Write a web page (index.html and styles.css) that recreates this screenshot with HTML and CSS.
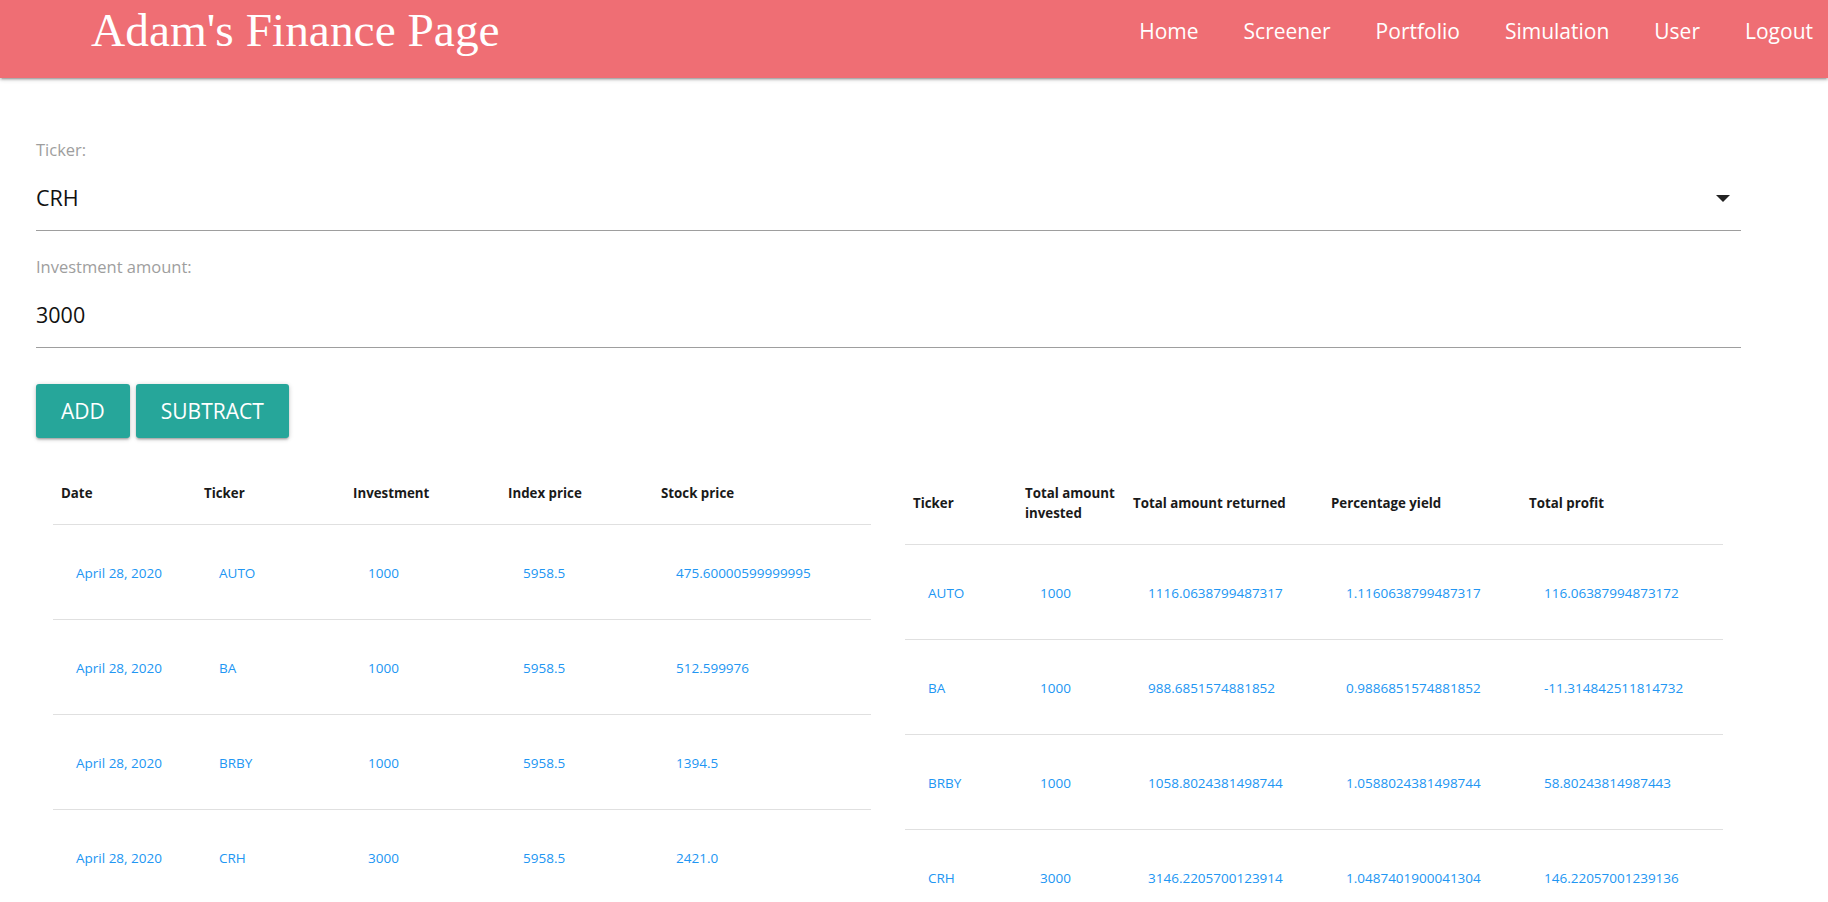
FILE: index.html
```html
<!DOCTYPE html>
<html lang="en">
<head>
<meta charset="utf-8">
<title>Adam's Finance Page</title>
<link rel="stylesheet" href="styles.css">
</head>
<body>
<nav class="navbar">
  <a class="brand" href="#">Adam's Finance Page</a>
  <ul class="nav-links">
    <li><a href="#">Home</a></li>
    <li><a href="#">Screener</a></li>
    <li><a href="#">Portfolio</a></li>
    <li><a href="#">Simulation</a></li>
    <li><a href="#">User</a></li>
    <li><a href="#">Logout</a></li>
  </ul>
</nav>
<main class="main">
  <form class="form">
    <div class="field">
      <div class="field-label">Ticker:</div>
      <div class="field-value select-value">
        <span>CRH</span>
        <span class="caret"></span>
      </div>
    </div>
    <div class="field field-second">
      <div class="field-label">Investment amount:</div>
      <div class="field-value">3000</div>
    </div>
    <div class="buttons">
      <button type="button" class="btn">ADD</button>
      <button type="button" class="btn">SUBTRACT</button>
    </div>
  </form>
  <div class="tables">
    <table class="table table-left">
      <colgroup>
        <col class="w143"><col class="w149"><col class="w155"><col class="w153"><col class="w218">
      </colgroup>
      <thead>
        <tr><th>Date</th><th>Ticker</th><th>Investment</th><th>Index price</th><th>Stock price</th></tr>
      </thead>
      <tbody>
        <tr><td>April 28, 2020</td><td>AUTO</td><td>1000</td><td>5958.5</td><td>475.60000599999995</td></tr>
        <tr><td>April 28, 2020</td><td>BA</td><td>1000</td><td>5958.5</td><td>512.599976</td></tr>
        <tr><td>April 28, 2020</td><td>BRBY</td><td>1000</td><td>5958.5</td><td>1394.5</td></tr>
        <tr><td>April 28, 2020</td><td>CRH</td><td>3000</td><td>5958.5</td><td>2421.0</td></tr>
      </tbody>
    </table>
    <table class="table table-right">
      <colgroup>
        <col class="w112"><col class="w108"><col class="w198"><col class="w198"><col class="w202">
      </colgroup>
      <thead>
        <tr><th>Ticker</th><th>Total amount invested</th><th>Total amount returned</th><th>Percentage yield</th><th>Total profit</th></tr>
      </thead>
      <tbody>
        <tr><td>AUTO</td><td>1000</td><td>1116.0638799487317</td><td>1.1160638799487317</td><td>116.06387994873172</td></tr>
        <tr><td>BA</td><td>1000</td><td>988.6851574881852</td><td>0.9886851574881852</td><td>-11.314842511814732</td></tr>
        <tr><td>BRBY</td><td>1000</td><td>1058.8024381498744</td><td>1.0588024381498744</td><td>58.80243814987443</td></tr>
        <tr><td>CRH</td><td>3000</td><td>3146.2205700123914</td><td>1.0487401900041304</td><td>146.22057001239136</td></tr>
      </tbody>
    </table>
  </div>
</main>
</body>
</html>
```
FILE: styles.css
```css
* { box-sizing: border-box; }

body {
  margin: 0;
  font-family: "Open Sans", "Noto Sans", sans-serif;
  color: #212121;
  background: #fff;
}

.navbar {
  height: 78px;
  background: #ef6e74;
  display: flex;
  justify-content: space-between;
  align-items: flex-start;
  box-shadow: 0 2px 2px 0 rgba(0,0,0,0.14), 0 3px 1px -2px rgba(0,0,0,0.12), 0 1px 5px 0 rgba(0,0,0,0.2);
  position: relative;
  z-index: 2;
}

.brand {
  font-family: "Liberation Serif", "Times New Roman", serif;
  font-size: 47.4px;
  line-height: 60px;
  color: #fff;
  text-decoration: none;
  padding-left: 91px;
  white-space: nowrap;
}

.nav-links {
  list-style: none;
  margin: 0;
  padding: 0 15px 0 0;
  display: flex;
  gap: 45px;
}

.nav-links a {
  display: block;
  font-size: 21px;
  line-height: 62px;
  color: #fff;
  text-decoration: none;
}

.main {
  padding: 60px 0 0 36px;
}

.form {
  width: 1705px;
}

.field-label {
  font-size: 16.5px;
  line-height: 24px;
  color: #9e9e9e;
}

.field-value {
  font-size: 21.5px;
  line-height: 44px;
  padding: 14px 0 10px;
  color: #111;
  border-bottom: 1px solid #9e9e9e;
}

.select-value {
  display: flex;
  justify-content: space-between;
  align-items: center;
}

.caret {
  width: 0;
  height: 0;
  border-left: 7.5px solid transparent;
  border-right: 7.5px solid transparent;
  border-top: 7.5px solid #222;
  margin-right: 11px;
}

.field-second {
  margin-top: 24px;
}

.buttons {
  display: flex;
  gap: 6px;
  margin-top: 36px;
}

.btn {
  height: 54px;
  padding: 0 25px;
  border: none;
  border-radius: 3px;
  background: #26a69a;
  color: #fff;
  font-family: "Open Sans", "Noto Sans", sans-serif;
  font-size: 21px;
  line-height: 54px;
  box-shadow: 0 2px 2px 0 rgba(0,0,0,0.14), 0 3px 1px -2px rgba(0,0,0,0.12), 0 1px 5px 0 rgba(0,0,0,0.2);
  cursor: pointer;
}

.tables {
  display: flex;
  align-items: flex-start;
  gap: 34px;
  margin: 24px 0 0 17px;
}

.table {
  border-collapse: collapse;
  table-layout: fixed;
  width: 818px;
}

.w143 { width: 143px; }
.w149 { width: 149px; }
.w155 { width: 155px; }
.w153 { width: 153px; }
.w218 { width: 218px; }
.w112 { width: 112px; }
.w108 { width: 108px; }
.w198 { width: 198px; }
.w202 { width: 202px; }

.table tr {
  border-bottom: 1px solid #e0e0e0;
}

.table th {
  text-align: left;
  font-weight: 700;
  font-size: 13.3px;
  line-height: 20px;
  padding: 21px 0 21px 8px;
  color: #1a1a1a;
  vertical-align: middle;
}

.table td {
  font-size: 13.5px;
  line-height: 20px;
  padding: 38px 0 36px 23px;
  color: #2196f3;
  white-space: nowrap;
  vertical-align: middle;
}
```
